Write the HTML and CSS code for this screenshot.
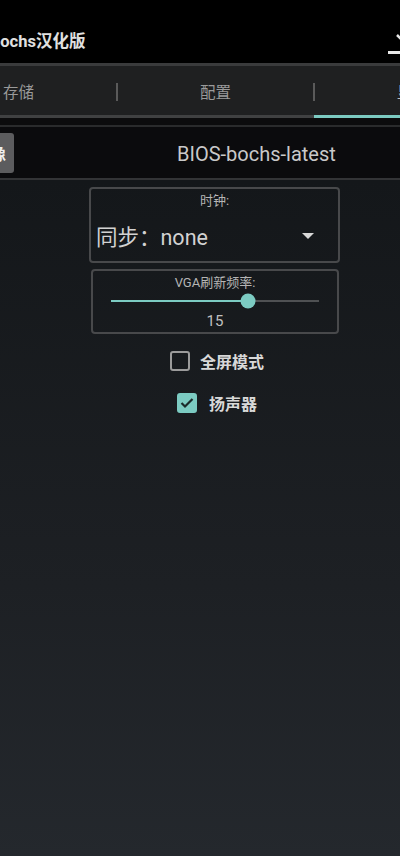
FILE: index.html
```html
<!DOCTYPE html>
<html lang="zh">
<head>
<meta charset="utf-8">
<link rel="stylesheet" href="styles.css">
</head>
<body>
<div class="app">
  <header class="topbar">
    <h1 class="title">bochs汉化版</h1>
    <svg class="dl-icon" width="30" height="30" viewBox="0 0 30 30">
      <path d="M15 0 L15 14 M9 6 L15 12 L21 6" stroke="#e8e8e8" stroke-width="2.5" fill="none"/>
      <rect x="0" y="22" width="30" height="3" fill="#e8e8e8"/>
    </svg>
  </header>
  <nav class="tabs">
    <div class="tab">存储</div>
    <span class="divider"></span>
    <div class="tab">配置</div>
    <span class="divider"></span>
    <div class="tab active">显示</div>
  </nav>
  <div class="gap-band"></div>
  <div class="bios-row">
    <button class="img-btn">选择镜像</button>
    <span class="bios-name">BIOS-bochs-latest</span>
  </div>
  <main class="content">
    <section class="box clock">
      <div class="box-title">时钟:</div>
      <div class="select">
        <span class="select-value">同步：none</span>
        <svg class="caret" width="12" height="7" viewBox="0 0 12 7"><path d="M0 0 L12 0 L6 6 Z" fill="#d8d8d8"/></svg>
      </div>
    </section>
    <section class="box vga">
      <div class="box-title">VGA刷新频率:</div>
      <div class="slider">
        <div class="track"><div class="fill" style="width:66%"></div><div class="thumb" style="left:66%"></div></div>
      </div>
      <div class="slider-value">15</div>
    </section>
    <label class="check fullscreen">
      <span class="cb"></span>
      <span class="cb-label">全屏模式</span>
    </label>
    <label class="check speaker">
      <span class="cb on">
        <svg width="14" height="12" viewBox="0 0 14 12"><path d="M1.5 6 L5 9.5 L12.5 2" stroke="#1b2a2a" stroke-width="2.2" fill="none"/></svg>
      </span>
      <span class="cb-label">扬声器</span>
    </label>
  </main>
</div>
</body>
</html>
```

FILE: styles.css
```css
* { box-sizing: border-box; }
html, body { margin: 0; padding: 0; }
body {
  width: 400px;
  height: 856px;
  overflow: hidden;
  background: #000;
  font-family: Roboto, "Noto Sans CJK SC", "Noto Sans", sans-serif;
  color: #d0d0d0;
}
.app {
  width: 400px;
  height: 856px;
  display: flex;
  flex-direction: column;
  overflow: hidden;
}
.topbar {
  height: 66px;
  flex: none;
  background: #000;
  border-bottom: 3px solid #3a3b3c;
  display: flex;
  align-items: center;
  justify-content: space-between;
  padding-top: 16px;
  overflow: hidden;
}
.title {
  margin: 0 0 0 -9px;
  font-size: 16.5px;
  font-weight: 700;
  color: #e0e0e0;
  letter-spacing: 0;
}
.dl-icon {
  flex: none;
  margin-right: -18px;
  margin-top: 8px;
}
.tabs {
  height: 52px;
  flex: none;
  display: flex;
  align-items: center;
  background: #1f2021;
  margin-left: -80px;
  width: 600px;
  position: relative;
}
.tab {
  width: 197px;
  height: 100%;
  display: flex;
  align-items: center;
  justify-content: center;
  font-size: 15.5px;
  color: #9a9a9a;
  padding-bottom: 2px;
  box-shadow: inset 0 -3px 0 #404142;
}
.tab.active {
  box-shadow: inset 0 -3px 0 #7ccbc2;
  color: #bdbdbd;
}
.divider {
  width: 2px;
  height: 18px;
  background: #5a5a5a;
  flex: none;
  margin: 0 -1px;
  position: relative;
  z-index: 1;
  align-self: center;
}
.gap-band {
  height: 9px;
  flex: none;
  background: #0c0c0d;
  border-bottom: 2px solid #2a2b2c;
}
.bios-row {
  height: 53px;
  flex: none;
  display: flex;
  align-items: center;
  background: #0b0b0d;
  border-bottom: 2px solid #333436;
}
.img-btn {
  flex: none;
  height: 40px;
  margin-left: -66px;
  padding: 0 8px;
  border: none;
  border-radius: 3px;
  background: #5c5c5e;
  color: #f0f0f0;
  font-family: "Noto Sans CJK SC", sans-serif;
  font-size: 16px;
  font-weight: 700;
}
.bios-name {
  margin-left: 163px;
  margin-top: 3px;
  font-size: 20px;
  color: #c9c9c9;
  white-space: nowrap;
}
.content {
  flex: 1;
  background: linear-gradient(180deg, #14171a 0%, #1d2024 60%, #24282d 100%);
  display: flex;
  flex-direction: column;
  align-items: flex-start;
  padding-top: 7px;
}
.box {
  border: 2px solid #48494b;
  border-radius: 4px;
  display: flex;
  flex-direction: column;
  align-items: stretch;
}
.box-title {
  text-align: center;
  font-size: 13px;
  color: #b5b5b5;
  font-family: Roboto, "Noto Sans CJK SC", sans-serif;
}
.clock {
  width: 251px;
  height: 76px;
  margin-left: 89px;
  padding-top: 1px;
}
.select {
  display: flex;
  align-items: center;
  justify-content: space-between;
  padding: 0 24px 0 5px;
  margin-top: 11px;
}
.select-value {
  font-size: 21.5px;
  color: #d2d2d2;
  font-family: Roboto, "Noto Sans CJK SC", sans-serif;
}
.caret { display: block; margin-top: 1px; }
.vga {
  width: 248px;
  height: 65px;
  margin-left: 91px;
  margin-top: 6px;
  padding-top: 1px;
}
.slider {
  padding: 0 18px;
  height: 20px;
  display: flex;
  align-items: center;
}
.track {
  position: relative;
  width: 100%;
  height: 2px;
  background: #4f5153;
}
.fill {
  height: 100%;
  background: #7ccbc2;
}
.thumb {
  position: absolute;
  top: 50%;
  width: 15px;
  height: 15px;
  border-radius: 50%;
  background: #7ccbc2;
  transform: translate(-50%, -50%);
}
.slider-value {
  text-align: center;
  font-size: 15px;
  color: #c0c0c0;
  margin-top: 1px;
}
.check {
  display: flex;
  align-items: center;
  gap: 10px;
  font-family: "Noto Sans CJK SC", sans-serif;
}
.fullscreen { margin-left: 170px; margin-top: 15px; }
.speaker { margin-left: 177px; margin-top: 18px; gap: 12px; }
.cb {
  width: 20px;
  height: 20px;
  border: 2px solid #9b9b9b;
  border-radius: 3px;
  display: flex;
  align-items: center;
  justify-content: center;
}
.cb.on {
  background: #7ccbc2;
  border-color: #7ccbc2;
}
.cb-label {
  font-size: 16px;
  font-weight: 700;
  color: #d8d8d8;
}
```
